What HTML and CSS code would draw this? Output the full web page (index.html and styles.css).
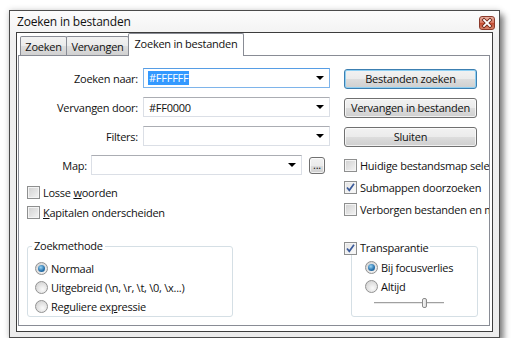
FILE: index.html
```html
<!DOCTYPE html>
<html>
<head>
<meta charset="utf-8">
<link rel="stylesheet" href="styles.css">
</head>
<body>
<div class="window">
  <div class="titlebar">
    <span class="title">Zoeken in bestanden</span>
    <div class="close">
      <svg width="14" height="12" viewBox="0 0 14 12"><path d="M4 3 L10 9 M10 3 L4 9" stroke="#6b2416" stroke-width="3.4" stroke-linecap="square"/><path d="M4 3 L10 9 M10 3 L4 9" stroke="#fff" stroke-width="1.8" stroke-linecap="square"/></svg>
    </div>
  </div>
  <div class="client">
    <div class="tabs">
      <div class="tab t1">Zoeken</div>
      <div class="tab t2">Vervangen</div>
      <div class="tab active">Zoeken in bestanden</div>
    </div>
    <div class="panel">
      <div class="left">
        <div class="fields">
          <label class="lbl">Zoeken naar:</label>
          <div class="combo focus"><span class="sel">#FFFFFF</span><span class="arrow"></span></div>
          <label class="lbl">Vervangen door:</label>
          <div class="combo"><span>#FF0000</span><span class="arrow"></span></div>
          <label class="lbl">Filters:</label>
          <div class="combo"><span></span><span class="arrow"></span></div>
        </div>
        <div class="maprow">
          <label class="lbl">Map:</label>
          <div class="combo"><span></span><span class="arrow"></span></div>
          <div class="btn dots">...</div>
        </div>
        <div class="checks">
          <div class="crow"><span class="cb"></span><span>Losse <u>w</u>oorden</span></div>
          <div class="crow"><span class="cb"></span><span><u>K</u>apitalen onderscheiden</span></div>
        </div>
        <div class="group gl">
          <span class="legend">Zoekmethode</span>
          <div class="rrow"><span class="rb on"></span><span>Normaal</span></div>
          <div class="rrow"><span class="rb"></span><span>Uitgebreid (\n, \r, \t, \0, \x...)</span></div>
          <div class="rrow"><span class="rb"></span><span>Reguliere ex<u>p</u>ressie</span></div>
        </div>
      </div>
      <div class="right">
        <div class="btn default">Bestanden zoeken</div>
        <div class="btn">Vervangen in bestanden</div>
        <div class="btn">Sluiten</div>
        <div class="rchecks">
          <div class="crow r"><span class="cb"></span><span>Huidige bestandsmap selecteren</span></div>
          <div class="crow r"><span class="cb checked"><svg width="11" height="11" viewBox="0 0 11 11"><path d="M2 5.5 L4.3 8.3 L9 1.8" fill="none" stroke="#3a5a9a" stroke-width="1.7"/></svg></span><span>Submappen doorzoeken</span></div>
          <div class="crow r"><span class="cb"></span><span>Verborgen bestanden en mappen</span></div>
        </div>
        <div class="group gr">
          <span class="legend2"><span class="cb checked"><svg width="11" height="11" viewBox="0 0 11 11"><path d="M2 5.5 L4.3 8.3 L9 1.8" fill="none" stroke="#3a5a9a" stroke-width="1.7"/></svg></span><span>Transparantie</span></span>
          <div class="rrow"><span class="rb on"></span><span>Bij focusverlies</span></div>
          <div class="rrow"><span class="rb"></span><span>Altijd</span></div>
          <div class="slider"><span class="thumb"></span></div>
        </div>
      </div>
    </div>
  </div>
</div>
</body>
</html>
```

FILE: styles.css
```css
html, body {
  margin: 0;
  background: #fff;
}
body {
  font-family: "Open Sans", "Noto Sans", sans-serif;
  font-size: 11px;
  letter-spacing: -0.25px;
  color: #111;
}
.window {
  margin: 10px 0 0 9px;
  width: 491px;
  height: 328px;
  box-sizing: border-box;
  border: 1px solid #4b4b4b;
  background: linear-gradient(#fcfcfc, #f0f0f0 30px, #ececec);
  display: flex;
  flex-direction: column;
  padding-bottom: 5px;
  box-shadow: 4px 5px 6px rgba(0, 0, 0, 0.45), 0 0 6px rgba(0, 0, 0, 0.18);
}
.titlebar {
  height: 21px;
  flex: none;
  display: flex;
  justify-content: space-between;
  align-items: flex-start;
  padding-left: 7px;
}
.title {
  font-size: 12px;
  letter-spacing: -0.2px;
  line-height: 22px;
}
.close {
  margin: 5px 4px 0 0;
  width: 16px;
  height: 14px;
  box-sizing: border-box;
  border: 1px solid #8b3a2b;
  border-radius: 3px;
  background: linear-gradient(#eab3a4, #d8745e 50%, #c44a30 51%, #d8866d);
  display: flex;
  align-items: center;
  justify-content: center;
}
.client {
  margin: 0 6px;
  flex: 1;
  border: 1px solid #3d3d3d;
  background: #fff;
  display: flex;
  flex-direction: column;
}
.tabs {
  height: 22px;
  flex: none;
  display: flex;
  align-items: flex-end;
  padding-left: 3px;
}
.tab {
  height: 19px;
  box-sizing: border-box;
  border: 1px solid #898c95;
  border-bottom: none;
  border-radius: 2px 2px 0 0;
  background: linear-gradient(#f3f3f3, #ebebeb 50%, #dedede 51%, #d1d1d1);
  text-align: center;
  line-height: 19px;
  white-space: nowrap;
}
.t1 { width: 47px; }
.t2 { width: 63px; margin-left: -1px; }
.tab.active {
  width: 116px;
  height: 23px;
  margin-left: -1px;
  margin-bottom: -1px;
  background: #fff;
  line-height: 20px;
  position: relative;
  z-index: 1;
}
.panel {
  margin: 0 2px 5px 1px;
  flex: 1;
  border: 1px solid #898c95;
  background: #fff;
  display: flex;
  padding: 12px 0 0 8px;
  overflow: hidden;
}
.left {
  width: 303px;
  flex: none;
  display: flex;
  flex-direction: column;
}
.fields {
  display: grid;
  grid-template-columns: 111px 187px;
  grid-auto-rows: 20px;
  column-gap: 5px;
  row-gap: 9px;
  align-items: center;
}
.lbl {
  text-align: right;
  white-space: nowrap;
}
.combo {
  height: 20px;
  box-sizing: border-box;
  border: 1px solid #dbdfe6;
  border-top-color: #abadb3;
  display: flex;
  align-items: center;
  justify-content: space-between;
  padding: 0 4px 0 5px;
}
.combo.focus {
  border-color: #7eb4ea;
  border-top-color: #569de5;
}
.sel {
  background: #3399ff;
  color: #fff;
  line-height: 14px;
  padding: 0 1px;
  margin-left: -1px;
}
.arrow {
  width: 0;
  height: 0;
  border-left: 4px solid transparent;
  border-right: 4px solid transparent;
  border-top: 4px solid #000;
  margin-right: 1px;
}
.maprow {
  margin-top: 9px;
  height: 20px;
  display: grid;
  grid-template-columns: 60px 211px 19px;
  column-gap: 4px;
  align-items: center;
}
.btn {
  height: 20px;
  box-sizing: border-box;
  border: 1px solid #707070;
  border-radius: 3px;
  background: linear-gradient(#f2f2f2, #ebebeb 50%, #dddddd 51%, #cfcfcf);
  box-shadow: inset 0 0 0 1px rgba(255, 255, 255, 0.7);
  text-align: center;
  line-height: 18px;
  white-space: nowrap;
}
.btn.dots {
  height: 17px;
  margin-left: 3px;
  line-height: 13px;
}
.right {
  margin-left: 14px;
  width: 170px;
  flex: none;
  display: flex;
  flex-direction: column;
}
.right > .btn {
  width: 133px;
  margin-top: 9px;
}
.right > .btn.default {
  margin-top: 1px;
  border-color: #3c7fb1;
  box-shadow: inset 0 0 0 1px #8fd0f3;
}
.checks {
  margin-top: 7px;
}
.crow {
  height: 20px;
  display: flex;
  align-items: center;
  gap: 3px;
  white-space: nowrap;
}
.rchecks {
  margin-top: 7px;
}
.crow.r {
  height: 22px;
}
.cb {
  width: 13px;
  height: 13px;
  box-sizing: border-box;
  flex: none;
  border: 1px solid #8e8f8f;
  background: linear-gradient(135deg, #d0d0d0, #f4f4f4);
  box-shadow: inset 0 0 0 1px #f4f4f4;
  display: flex;
  align-items: center;
  justify-content: center;
}
.cb.checked {
  background: linear-gradient(135deg, #e2e2e2, #fbfbfb);
}
.group {
  position: relative;
  height: 71px;
  box-sizing: border-box;
  border: 1px solid #d5dfe5;
  border-radius: 3px;
}
.gl {
  margin-top: 24px;
  width: 206px;
  padding: 12px 0 0 7px;
}
.gr {
  margin-top: 26px;
  margin-left: 7px;
  width: 127px;
  padding: 11px 0 0 13px;
}
.legend {
  position: absolute;
  top: -9px;
  left: 4px;
  padding: 0 2px;
  background: #fff;
  line-height: 16px;
}
.legend2 {
  position: absolute;
  top: -6px;
  left: -8px;
  display: flex;
  align-items: center;
  gap: 3px;
  padding-right: 2px;
  background: #fff;
  line-height: 14px;
}
.rrow {
  height: 19px;
  display: flex;
  align-items: center;
  gap: 3px;
  white-space: nowrap;
}
.rb {
  width: 13px;
  height: 13px;
  box-sizing: border-box;
  flex: none;
  border-radius: 50%;
  border: 1px solid #929292;
  background: radial-gradient(circle at 60% 65%, #fafafa, #d4d4d4 80%);
  display: flex;
  align-items: center;
  justify-content: center;
}
.rb.on::after {
  content: "";
  width: 7px;
  height: 7px;
  border-radius: 50%;
  background: radial-gradient(circle at 40% 35%, #9ad5f5, #2c76b0 55%, #124b7e);
}
.slider {
  position: relative;
  margin-left: 9px;
  width: 70px;
  height: 14px;
}
.slider::before {
  content: "";
  position: absolute;
  left: 0;
  right: 0;
  top: 6px;
  height: 1px;
  background: #a0a0a0;
  box-shadow: 0 1px 0 #e8e8e8;
}
.thumb {
  position: absolute;
  left: 48px;
  top: 2px;
  width: 5px;
  height: 10px;
  box-sizing: border-box;
  border: 1px solid #8a8a8a;
  border-radius: 2px;
  background: linear-gradient(90deg, #f6f6f6, #dcdcdc);
}
```
